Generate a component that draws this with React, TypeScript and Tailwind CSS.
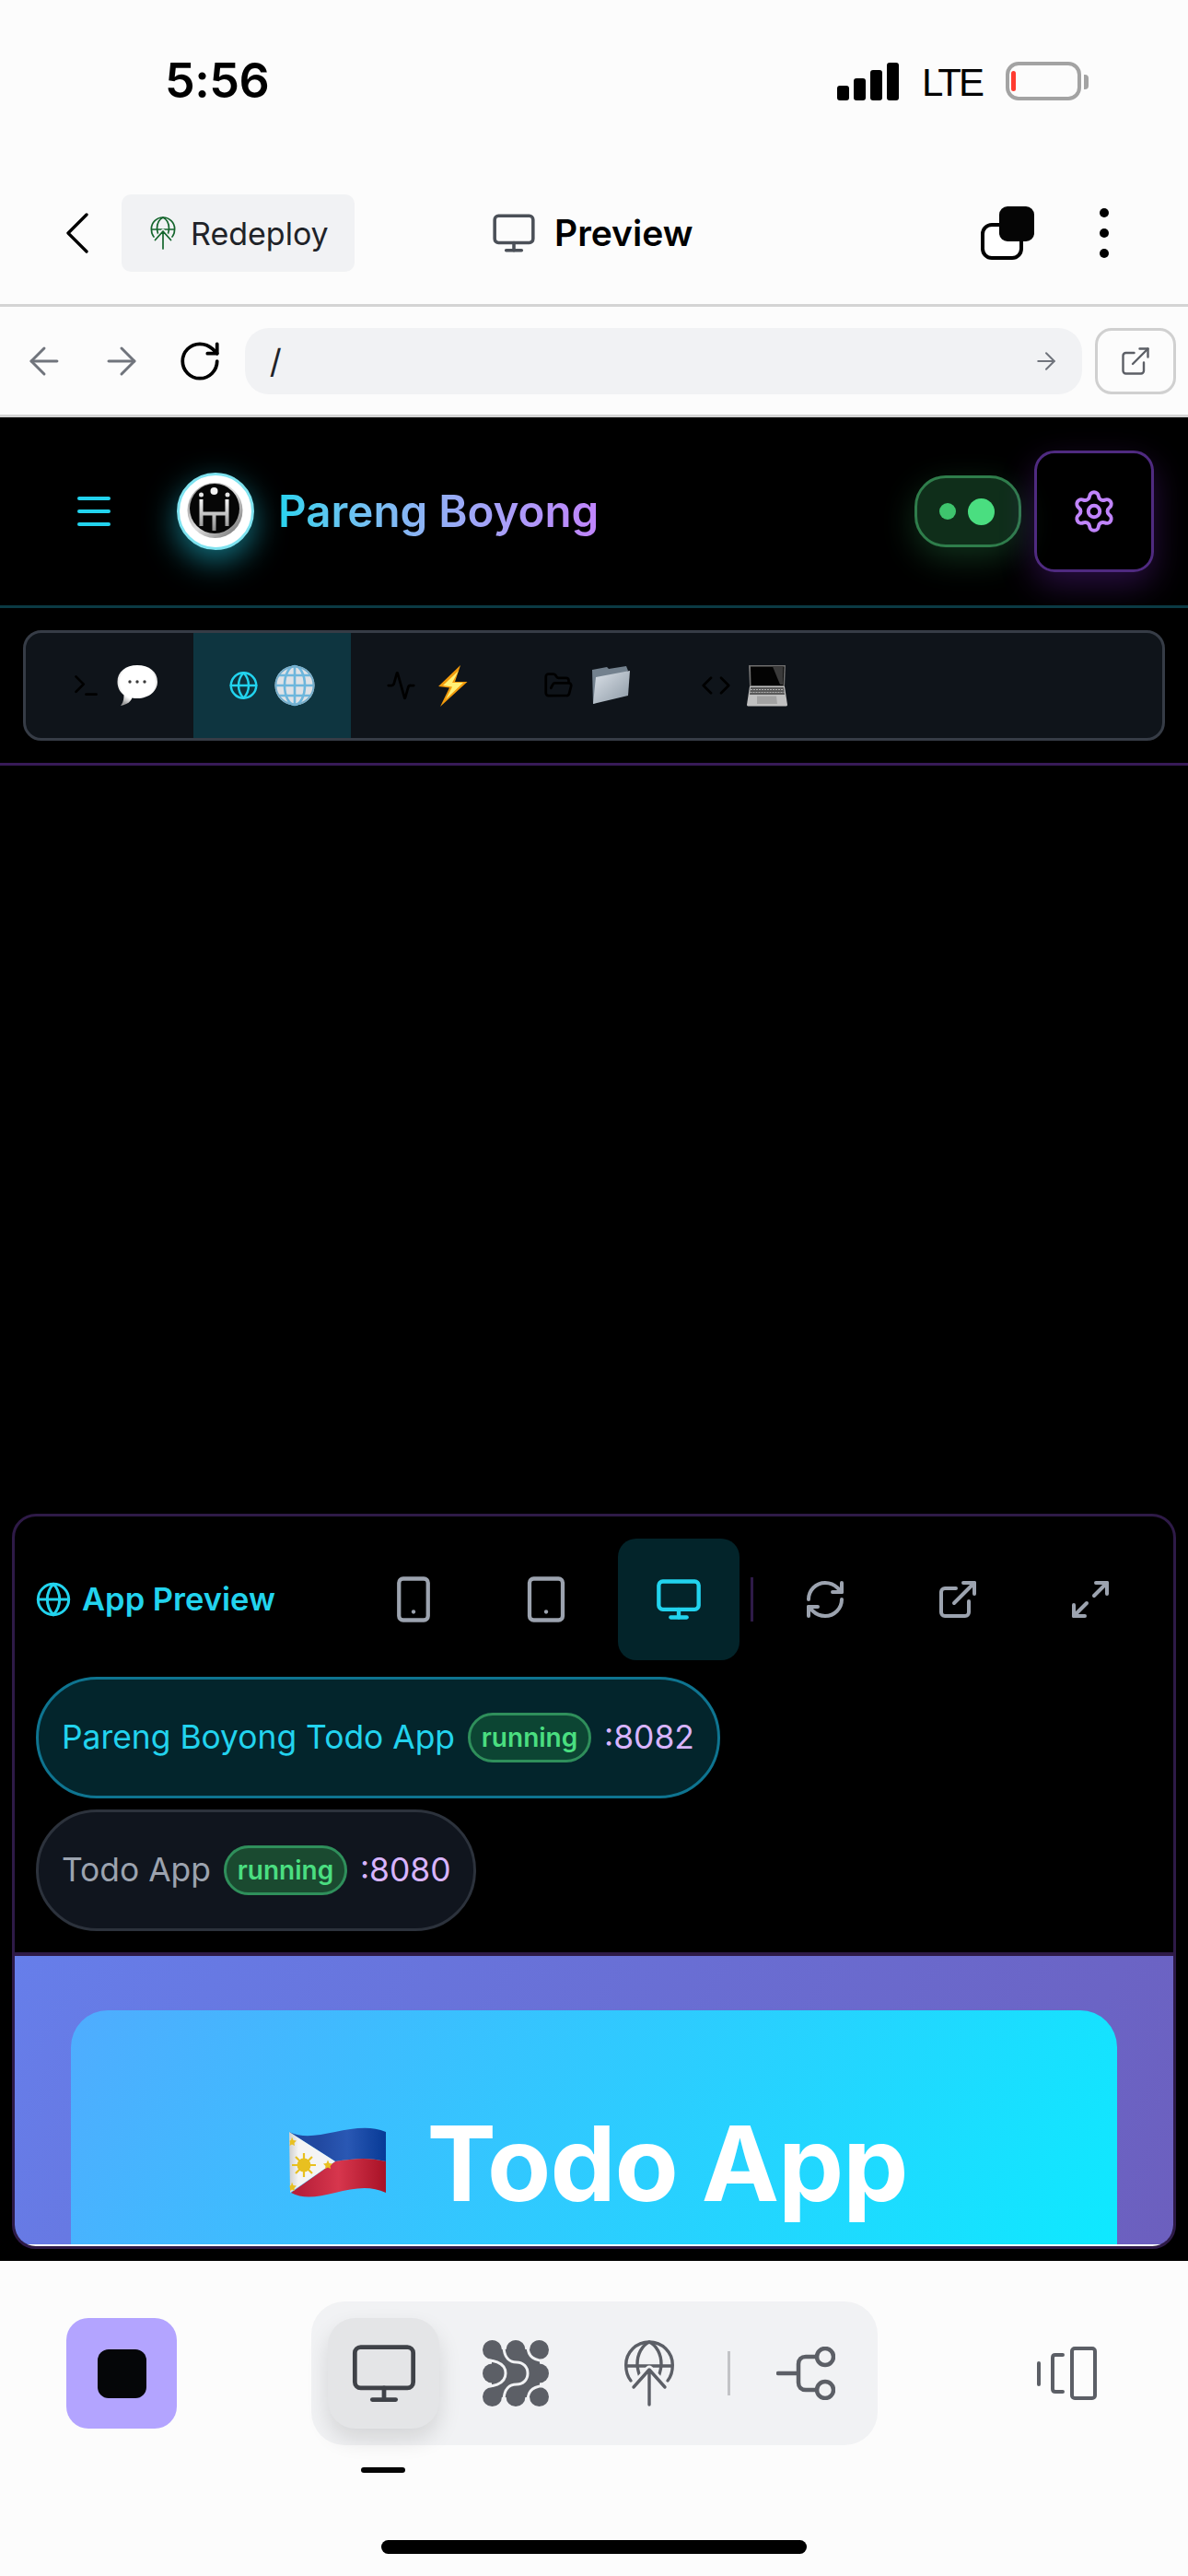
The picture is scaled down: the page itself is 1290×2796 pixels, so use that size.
import { Activity, ArrowLeft, ArrowRight, ChevronLeft, Code, ExternalLink, FolderOpen, Globe, Maximize2, Menu, Monitor, RefreshCw, RotateCw, Settings, Smartphone, Tablet, Terminal } from 'lucide-react';

function DeployIcon({ className, color, bg }: { className: string; color: string; bg: string }) {
  return (
    <svg className={className} viewBox="0 0 54 72" fill="none" stroke={color} strokeWidth="3.4" strokeLinecap="round" strokeLinejoin="round">
      <path d="M7 44C3 39 1.700 33 1.700 27C1.700 13 13 2 27 2C41 2 52.300 13 52.300 27C52.300 33 51 39 47 44" />
      <path d="M17 40C15 34 14 30 14 26C14 15 19 6 27 2C35 6 40 15 40 26C40 30 39 34 37 40" />
      <path d="M3 28H51" />
      <path d="M27 32L9 52M27 32L45 52" stroke={bg} strokeWidth="9" />
      <path d="M27 70V33M10 51L27 32L44 51" />
    </svg>
  );
}

function MeshIcon() {
  return (
    <svg className="w-[72px] h-[72px]" viewBox="0 0 72 72">
      <g fill="#5c5f66">
        {[10.5, 36, 61.5].map((x) => [10.5, 36, 61.5].map((y) => <circle key={`${x}-${y}`} cx={x} cy={y} r="10.500" />))}
        <rect x="10" y="10" width="52" height="52" />
      </g>
      <g fill="none" stroke="#f1f2f4" strokeWidth="3">
        <path d="M23 6C23 20 30 24 37 24C44 24 49 29 49 36C49 43 44 48 37 48C30 48 23 52 23 66" />
        <path d="M49 6C49 18 55 23 74 23" />
        <path d="M49 66C49 54 55 49 74 49" />
        <path d="M-2 23C10 20 25 24 25 36C25 48 10 52 -2 49" />
      </g>
    </svg>
  );
}

function BranchIcon() {
  return (
    <svg className="w-[64px] h-[58px]" viewBox="0 0 64 58" fill="none" stroke="#5c5f66" strokeWidth="4.500" strokeLinecap="round">
      <path d="M2 29H24M44 11H32C27 11 24 14 24 19V39C24 44 27 47 32 47H44" />
      <circle cx="53" cy="11" r="9" />
      <circle cx="53" cy="47" r="9" />
    </svg>
  );
}

function DevicesIcon() {
  return (
    <svg className="w-[66px] h-[58px]" viewBox="0 0 66 58" fill="none" stroke="#5c5f66" strokeWidth="4" strokeLinecap="round" strokeLinejoin="round">
      <rect x="39" y="2" width="25" height="54" rx="3" />
      <path d="M29 9H21C19 9 18 10 18 12V46C18 48 19 49 21 49H29" />
      <path d="M3 18V41" />
    </svg>
  );
}

function Logo() {
  return (
    <svg className="w-[84px] h-[84px]" viewBox="0 0 84 84">
      <defs>
        <linearGradient id="logoRing" x1="0" y1="0" x2="1" y2="1">
          <stop offset="0" stopColor="#8a8a8a" />
          <stop offset="0.5" stopColor="#dddddd" />
          <stop offset="1" stopColor="#666666" />
        </linearGradient>
        <linearGradient id="logoMark" x1="0" y1="0" x2="0" y2="1">
          <stop offset="0" stopColor="#f5f5f5" />
          <stop offset="1" stopColor="#8c8c8c" />
        </linearGradient>
      </defs>
      <circle cx="42" cy="42" r="40.500" fill="#ffffff" stroke="#7fe3f0" strokeWidth="3" />
      <circle cx="41.500" cy="41" r="30" fill="url(#logoRing)" />
      <circle cx="41" cy="39" r="27" fill="#060606" />
      <circle cx="40.500" cy="20" r="4" fill="#f2f2f2" />
      <circle cx="26.500" cy="24" r="2.500" fill="#e5e5e5" />
      <circle cx="55" cy="24" r="2.500" fill="#e5e5e5" />
      <path d="M24.500 29H28.500V58H24.500ZM52.500 29H56.500V58H52.500ZM28.500 42.500H52.500V46.500H28.500ZM38.500 46.500H42.500V63H38.500Z" fill="url(#logoMark)" />
    </svg>
  );
}

function SpeechEmoji() {
  return (
    <svg className="w-[44px] h-[46px]" viewBox="0 0 44 46">
      <defs>
        <radialGradient id="speech" cx="0.5" cy="0.42" r="0.62">
          <stop offset="0.7" stopColor="#ffffff" />
          <stop offset="1" stopColor="#9a9a9a" />
        </radialGradient>
      </defs>
      <path d="M22 1C35 1 44 8 44 19C44 29 35 37 22 37C20 37 18 36.800 16.500 36.400C15 40 12 43.500 4 45C6.500 42 7.500 38.500 7.500 33.500C3 30 0.500 25 0.500 19C0.500 8 9.500 1 22 1Z" fill="url(#speech)" />
      <circle cx="14" cy="19" r="1.700" fill="#3a3a3a" />
      <circle cx="22" cy="19" r="1.700" fill="#3a3a3a" />
      <circle cx="30" cy="19" r="1.700" fill="#3a3a3a" />
    </svg>
  );
}

function GlobeEmoji() {
  return (
    <svg className="w-[44px] h-[46px]" viewBox="0 0 44 46" fill="none">
      <circle cx="22" cy="23" r="21.500" fill="#dfe2e6" />
      <g stroke="#6db6dc" strokeWidth="2.600">
        <path d="M1 23H43M4 12H40M4 34H40M22 2V44" />
        <ellipse cx="22" cy="23" rx="11" ry="21" />
      </g>
      <circle cx="22" cy="23" r="20.500" stroke="#76aecb" strokeWidth="2" />
    </svg>
  );
}

function BoltEmoji() {
  return (
    <svg className="w-[32px] h-[45px]" viewBox="0 0 32 45">
      <path d="M24 0L0 23L12 24.500L2 45L31.500 18L18 18Z" fill="#f19a0c" />
      <path d="M22 6L5 22L15 23.500L8 37L27 19L15 19Z" fill="#fff176" />
    </svg>
  );
}

function FolderEmoji() {
  return (
    <svg className="w-[42px] h-[42px]" viewBox="0 0 42 42">
      <defs>
        <linearGradient id="folder" x1="0" y1="0" x2="1" y2="1">
          <stop offset="0" stopColor="#dbe1e8" />
          <stop offset="1" stopColor="#8c99a5" />
        </linearGradient>
      </defs>
      <path d="M0 4L16 1L18 3L37 0L39 5L4 40L1 41Z" fill="#73818e" />
      <path d="M4 12L41 5L39 32L1 41Z" fill="url(#folder)" />
    </svg>
  );
}

function LaptopEmoji() {
  return (
    <svg className="w-[44px] h-[46px]" viewBox="0 0 44 46">
      <path d="M2 1H42L41 24H3Z" fill="#6f6f6f" />
      <path d="M4 2.500H40.500L39.500 23H4.500Z" fill="#030303" />
      <path d="M28 2.500H39.500L39 22H36Z" fill="#3a3a3a" />
      <path d="M3 24H41L44 44C44 45 43 45.500 42 45.500H2C1 45.500 0 45 0 44Z" fill="#c0c0c0" />
      <path d="M4 25H40L41 33H3Z" fill="#5a5a5a" />
      <path d="M4 27.500H40M3.500 30.500H40.500" stroke="#b0b0b0" strokeWidth="1" strokeDasharray="2 1" />
      <path d="M11 34.500H32L33 43H11Z" fill="#a2a2a2" />
    </svg>
  );
}

function FlagEmoji() {
  return (
    <svg className="w-[105px] h-[76px]" viewBox="0 0 105 76">
      <defs>
        <linearGradient id="flagBlue" x1="0" y1="0" x2="1" y2="0">
          <stop offset="0.3" stopColor="#2148a0" />
          <stop offset="0.6" stopColor="#2a58b4" />
          <stop offset="1" stopColor="#073a96" />
        </linearGradient>
        <linearGradient id="flagRed" x1="0" y1="0" x2="1" y2="0">
          <stop offset="0.1" stopColor="#b8203a" />
          <stop offset="0.5" stopColor="#d7364d" />
          <stop offset="1" stopColor="#a81226" />
        </linearGradient>
        <linearGradient id="flagWhite" x1="0" y1="0" x2="1" y2="0">
          <stop offset="0" stopColor="#cfcfcf" />
          <stop offset="0.2" stopColor="#f4f4f4" />
        </linearGradient>
      </defs>
      <path d="M0 5C15 12 30 9 50 5C70 1 88 -2 105 5V37C85 32 70 34 50 37Z" fill="url(#flagBlue)" />
      <path d="M50 37C70 34 85 32 105 37V71C88 63 70 66 50 71C30 76 15 78 2 71Z" fill="url(#flagRed)" />
      <path d="M0 5L50 37L1 71Z" fill="url(#flagWhite)" />
      <g stroke="#e8c020" strokeWidth="2.200">
        <path d="M16 28V54M3 41H29M7 32L25 50M7 50L25 32" />
      </g>
      <circle cx="16" cy="41" r="7.500" fill="#e8c020" />
      <path d="M3 10.500L4.500 14L8 14.500L5.500 17L6 20L3 18.500L0.500 20L1 17L0.500 14.500L2 14Z" fill="#e8c020" />
      <path d="M42 35.500L43.500 39L47 39.500L44.500 42L45 45L42 43.500L39 45L39.500 42L37 39.500L40.500 39Z" fill="#e8c020" />
      <path d="M3 59.500L4.500 63L8 63.500L5.500 66L6 69L3 67.500L1 69L1 66L0.500 63.500L2 63Z" fill="#e8c020" />
    </svg>
  );
}

function Tab({ icon, emoji, active }: { icon: React.ReactNode; emoji: React.ReactNode; active?: boolean }) {
  return (
    <div className={`w-[171px] h-full pl-[38px] flex items-center gap-[17px] ${active ? 'bg-[#0e3540]' : ''}`}>
      <span className="w-[33px] flex justify-center">{icon}</span>
      {emoji}
    </div>
  );
}

function ToolButton({ icon, active }: { icon: React.ReactNode; active?: boolean }) {
  return (
    <div className={`w-[132px] h-[132px] rounded-[20px] flex items-center justify-center ${active ? 'bg-[#03242a]' : ''}`}>
      {icon}
    </div>
  );
}

function Badge({ bg }: { bg: string }) {
  return (
    <span className={`h-[54px] w-[134px] rounded-full border-[3px] border-[#2f8f5b] flex items-center justify-center text-[28px] font-semibold text-[#4ade80] ${bg}`}>
      running
    </span>
  );
}

export default function App() {
  return (
    <div className="w-[1290px] h-[2796px] bg-[#fcfcfc] flex flex-col font-['Inter',sans-serif] overflow-hidden">
      {/* status bar */}
      <div className="h-[178px] pl-[179px] pr-[108px] pb-[2px] flex items-center justify-between shrink-0">
        <span className="text-[52px] font-semibold text-black tracking-[-0.5px]">5:56</span>
        <div className="flex items-end h-[42px]">
          <div className="flex items-end gap-[5px] h-[41px]">
            <span className="w-[13px] h-[16px] rounded-[3px] bg-black" />
            <span className="w-[13px] h-[24px] rounded-[3px] bg-black" />
            <span className="w-[13px] h-[33px] rounded-[3px] bg-black" />
            <span className="w-[13px] h-[41px] rounded-[3px] bg-black" />
          </div>
          <span className="ml-[25px] w-[62px] text-[42px] leading-[38px] font-medium text-black font-['Liberation_Sans',sans-serif] tracking-[-3px]">LTE</span>
          <div className="ml-[29px] w-[82px] h-[42px] rounded-[14px] border-[4px] border-[#a3a3a3] flex items-center pl-[2px]">
            <span className="w-[5px] h-[22px] rounded-[3px] bg-[#ff3b30]" />
          </div>
          <span className="ml-[3px] mb-[12px] w-[5px] h-[16px] rounded-r-[4px] bg-[#a3a3a3]" />
        </div>
      </div>

      {/* toolbar */}
      <div className="h-[155px] shrink-0 border-b-[3px] border-[#d4d4d4] pl-[44px] pr-[86px] flex items-center pb-[2px]">
        <div className="flex items-center gap-[8px]">
          <ChevronLeft className="w-[80px] h-[80px] text-black" strokeWidth={1} />
          <div className="w-[253px] h-[84px] rounded-[10px] bg-[#f1f2f4] pl-[31px] flex items-center gap-[16px]">
            <DeployIcon className="w-[28px] h-[36px]" color="#14652c" bg="#f1f2f4" />
            <span className="text-[34px] text-[#1f2328]">Redeploy</span>
          </div>
        </div>
        <div className="flex items-center gap-[19px] ml-[148px]">
          <Monitor className="w-[50px] h-[50px] text-[#4b5058]" strokeWidth={1.7} />
          <span className="text-[39px] font-semibold text-black">Preview</span>
        </div>
        <div className="ml-auto flex items-center gap-[71px]">
          <div className="relative w-[58px] h-[58px]">
            <span className="absolute left-0 bottom-0 w-[46px] h-[40px] rounded-[12px] border-[4px] border-black bg-white" />
            <span className="absolute right-0 top-0 w-[38px] h-[38px] rounded-[9px] bg-[#050505]" />
          </div>
          <div className="flex flex-col gap-[12px]">
            <span className="w-[10px] h-[10px] rounded-full bg-black" />
            <span className="w-[10px] h-[10px] rounded-full bg-black" />
            <span className="w-[10px] h-[10px] rounded-full bg-black" />
          </div>
        </div>
      </div>

      {/* url bar */}
      <div className="h-[120px] shrink-0 border-b-[3px] border-[#d4d4d4] pl-[24px] pr-[13px] flex items-center">
        <ArrowLeft className="w-[48px] h-[48px] text-[#70747c]" strokeWidth={1.5} />
        <ArrowRight className="ml-[36px] w-[48px] h-[48px] text-[#70747c]" strokeWidth={1.5} />
        <RotateCw className="ml-[36px] w-[50px] h-[50px] text-black" strokeWidth={1.8} />
        <div className="ml-[24px] w-[910px] h-[72px] rounded-[26px] bg-[#f1f2f4] pl-[27px] pr-[24px] flex items-center justify-between">
          <span className="text-[36px] text-[#1f2328]">/</span>
          <ArrowRight className="w-[30px] h-[30px] text-[#70747c]" strokeWidth={1.6} />
        </div>
        <div className="ml-[14px] w-[88px] h-[72px] rounded-[18px] border-[3px] border-[#d0d0d0] flex items-center justify-center">
          <ExternalLink className="w-[36px] h-[36px] text-[#5c5f66]" strokeWidth={1.6} />
        </div>
      </div>

      {/* dark app */}
      <div className="flex-1 min-h-0 bg-black flex flex-col">
        <div className="h-[207px] shrink-0 border-b-[3px] border-[#0b3a44] pl-[78px] pr-[37px] flex items-center justify-between overflow-hidden">
          <div className="flex items-center">
            <Menu className="w-[48px] h-[48px] text-[#22d3ee]" strokeWidth={2} />
            <div className="ml-[66px] rounded-full shadow-[0_12px_34px_rgba(34,211,238,0.55)]">
              <Logo />
            </div>
            <span className="ml-[26px] text-[47.5px] font-semibold bg-gradient-to-r from-[#22d3ee] to-[#c084fc] bg-clip-text text-transparent">Pareng Boyong</span>
          </div>
          <div className="flex items-center gap-[14px]">
            <div className="w-[116px] h-[78px] rounded-[34px] bg-[#0f2e1a] border-[3px] border-[#2f7d4b] shadow-[0_12px_36px_rgba(74,222,128,0.22)] flex items-center pl-[24px] gap-[13px]">
              <span className="w-[18px] h-[18px] rounded-full bg-[#3ec46d]" />
              <span className="w-[29px] h-[29px] rounded-full bg-[#4ade80]" />
            </div>
            <div className="w-[130px] h-[132px] rounded-[22px] border-[3px] border-[#4f2a80] shadow-[0_14px_36px_rgba(147,51,234,0.28)] flex items-center justify-center">
              <Settings className="w-[50px] h-[50px] text-[#c084fc]" strokeWidth={1.9} />
            </div>
          </div>
        </div>

        <div className="h-[171px] shrink-0 border-b-[3px] border-[#371a57] pt-[24px] px-[25px]">
          <div className="h-[120px] rounded-[20px] border-[3px] border-[#363c46] bg-[#0f141a] pl-[11px] flex overflow-hidden">
            <Tab icon={<Terminal className="w-[40px] h-[40px] text-black" strokeWidth={2} />} emoji={<SpeechEmoji />} />
            <Tab active icon={<Globe className="w-[40px] h-[40px] text-[#22d3ee]" strokeWidth={1.8} />} emoji={<GlobeEmoji />} />
            <Tab icon={<Activity className="w-[40px] h-[40px] text-black" strokeWidth={2} />} emoji={<span className="ml-[7px]"><BoltEmoji /></span>} />
            <Tab icon={<FolderOpen className="w-[40px] h-[40px] text-black" strokeWidth={2} />} emoji={<span className="ml-[3px]"><FolderEmoji /></span>} />
            <Tab icon={<Code className="w-[40px] h-[40px] text-black" strokeWidth={2} />} emoji={<LaptopEmoji />} />
          </div>
        </div>

        <div className="flex-1" />

        {/* app preview panel */}
        <div className="h-[798px] mx-[13px] mb-[13px] shrink-0 rounded-[26px] border-[3px] border-[#2e1a47] flex flex-col overflow-hidden">
          <div className="mt-[24px] pl-[22px] pr-[24px] flex items-center justify-between shrink-0">
            <div className="flex items-center gap-[11px]">
              <Globe className="w-[40px] h-[40px] text-[#22d3ee]" strokeWidth={1.8} />
              <span className="text-[34.5px] font-semibold text-[#22d3ee]">App Preview</span>
            </div>
            <div className="flex items-center gap-[12px]">
              <ToolButton icon={<Smartphone className="w-[54px] h-[54px] text-[#9ca3af]" strokeWidth={1.9} />} />
              <ToolButton icon={<Tablet className="w-[54px] h-[54px] text-[#9ca3af]" strokeWidth={1.9} />} />
              <ToolButton active icon={<Monitor className="w-[52px] h-[52px] text-[#22d3ee]" strokeWidth={2} />} />
              <span className="w-[3px] h-[48px] bg-[#2e1a47]" />
              <ToolButton icon={<RefreshCw className="w-[48px] h-[48px] text-[#9ca3af]" strokeWidth={2} />} />
              <ToolButton icon={<ExternalLink className="w-[48px] h-[48px] text-[#9ca3af]" strokeWidth={2} />} />
              <ToolButton icon={<Maximize2 className="w-[48px] h-[48px] text-[#9ca3af]" strokeWidth={2} />} />
            </div>
          </div>
          <div className="mt-[18px] pl-[23px] flex flex-col items-start gap-[12px] shrink-0">
            <div className="h-[132px] pl-[25px] pr-[25px] rounded-full bg-[#03252c] border-[3px] border-[#0e7490] flex items-center gap-[14px]">
              <span className="text-[35.4px] text-[#22d3ee]">Pareng Boyong Todo App</span>
              <Badge bg="bg-[#0c4533]" />
              <span className="text-[35.4px] text-[#d8b4fe]">:8082</span>
            </div>
            <div className="h-[132px] pl-[25px] pr-[24px] rounded-full bg-[#10151e] border-[3px] border-[#2c323c] flex items-center gap-[14px]">
              <span className="text-[35.4px] text-[#9ca3af]">Todo App</span>
              <Badge bg="bg-[#1a4a30]" />
              <span className="text-[35.4px] text-[#d8b4fe]">:8080</span>
            </div>
          </div>
          <div className="mt-[23px] border-t-[4px] border-[#2e1a47] flex-1 min-h-0 bg-[linear-gradient(120deg,#667eea,#6c5fbe)] pt-[59px] px-[61px] overflow-hidden">
            <div className="h-full rounded-t-[40px] bg-[linear-gradient(120deg,#4facfe,#0ee9ff)] pl-[10px] pt-[116px] flex items-start justify-center gap-[44px] overflow-hidden">
              <span className="mt-[11px]"><FlagEmoji /></span>
              <span className="text-[113px] leading-[100px] font-bold text-white tracking-[-1px]">Todo App</span>
            </div>
          </div>
          <div className="h-[2px] bg-white shrink-0" />
        </div>
      </div>

      {/* bottom bar */}
      <div className="h-[342px] shrink-0 flex flex-col relative">
        <div className="mt-[44px] pl-[72px] pr-[99px] flex items-center">
          <div className="w-[120px] h-[120px] rounded-[24px] bg-[#b3a4ff] flex items-center justify-center">
            <span className="w-[53px] h-[53px] rounded-[12px] bg-[#050608]" />
          </div>
          <div className="ml-[146px] w-[615px] h-[156px] rounded-[36px] bg-[#f1f2f4] pl-[18px] flex items-center">
            <div className="w-[121px] h-[120px] rounded-[30px] bg-[#e4e5e7] shadow-[0_12px_24px_rgba(0,0,0,0.12)] flex items-center justify-center">
              <Monitor className="w-[76px] h-[76px] text-[#3f4248]" strokeWidth={1.5} />
            </div>
            <span className="ml-[47px]"><MeshIcon /></span>
            <span className="ml-[82px]"><DeployIcon className="w-[54px] h-[72px]" color="#5c5f66" bg="#f1f2f4" /></span>
            <span className="ml-[58px] w-[3px] h-[48px] bg-[#c2c3c6]" />
            <span className="ml-[50px]"><BranchIcon /></span>
          </div>
          <div className="ml-auto"><DevicesIcon /></div>
        </div>
        <span className="ml-[392px] mt-[24px] w-[48px] h-[6px] rounded-full bg-[#050505]" />
        <span className="mt-[73px] ml-[414px] w-[462px] h-[15px] rounded-full bg-black" />
      </div>
    </div>
  );
}
